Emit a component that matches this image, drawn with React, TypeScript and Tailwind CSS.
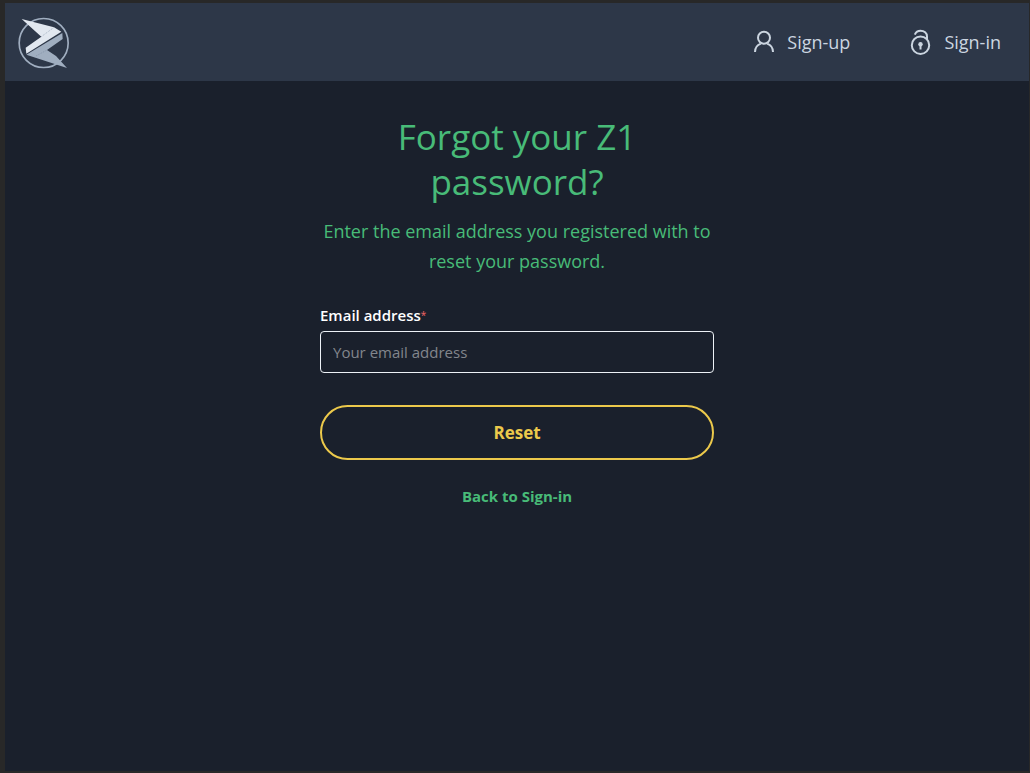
import React from "react";

function Logo() {
  return (
    <svg viewBox="15 9 234 234" className="size-[78px]" aria-hidden="true">
      <circle cx="131" cy="129" r="73.500" fill="none" stroke="#a0aec0" strokeWidth="5" />
      <path d="M65 57L162 82L184 95L79 161L77 143L124 110Z" fill="#e2e8f0" />
      <path d="M187 99L188 117L141 150L168 168L201 204L79 164Z" fill="#a0aec0" />
      <path d="M124 110L162 82M108 168L141 150" fill="none" stroke="#718096" strokeWidth="1.500" strokeDasharray="3 3" />
    </svg>
  );
}

function UserIcon() {
  return (
    <svg viewBox="0 0 24 24" className="size-6" fill="none" stroke="currentColor" strokeWidth="2" aria-hidden="true">
      <circle cx="13" cy="7.700" r="6" />
      <path d="M4 22a9 9 0 0 1 5.800-8.400M22 22a9 9 0 0 0-5.800-8.400" />
    </svg>
  );
}

function LockIcon() {
  return (
    <svg viewBox="0 0 24 28" className="h-7 w-6" fill="none" stroke="currentColor" strokeWidth="2" aria-hidden="true">
      <circle cx="12.500" cy="17.200" r="8.700" />
      <path d="M6.800 6.600C8 3.900 10 2.700 12.500 2.700C16.200 2.700 19 5.200 19 8.500V11.500" />
      <circle cx="12.500" cy="16.300" r="2.200" fill="currentColor" stroke="none" />
      <path d="M12.500 17v4.500" />
    </svg>
  );
}

export default function App() {
  return (
    <div className="min-h-screen border-t-3 border-r border-b-2 border-l-5 border-[#282828] bg-[#1a202c] font-['Open_Sans',sans-serif]">
      <header className="flex h-[78px] items-center justify-between bg-[#2d3748] pr-7 text-[#cbd5e0]">
        <a href="#home" aria-label="Z1 home"><Logo /></a>
        <nav className="flex items-center gap-[58px] text-lg">
          <a href="#sign-up" className="flex items-center gap-3"><UserIcon />Sign-up</a>
          <a href="#sign-in" className="flex items-center gap-3"><LockIcon />Sign-in</a>
        </nav>
      </header>
      <main className="mx-auto w-full max-w-[394px] pt-[33px] text-center text-[#48bb78]">
        <h1 className="px-10 text-[35px] leading-[45px]">Forgot your Z1 password?</h1>
        <p className="mt-3 text-[18px] leading-[30px]">Enter the email address you registered with to reset your password.</p>
        <form className="mt-[27px]" onSubmit={(e) => e.preventDefault()}>
          <label htmlFor="email" className="flex h-6 items-center text-[15px] font-semibold text-white">
            Email address<span className="text-[10px] font-normal text-[#f56565]">*</span>
          </label>
          <input id="email" type="email" required placeholder="Your email address" className="mt-1 block h-[42px] w-full rounded border border-[#edf2f7] bg-transparent px-3 text-[15px] text-white placeholder:text-[#82868d]" />
          <button type="submit" className="mt-8 h-[55px] w-full rounded-full border-2 border-[#ecc94b] text-[17px] font-bold text-[#ecc94b]">Reset</button>
        </form>
        <a href="#sign-in" className="mt-6 inline-block text-[15px] leading-6 font-bold">Back to Sign-in</a>
      </main>
    </div>
  );
}
